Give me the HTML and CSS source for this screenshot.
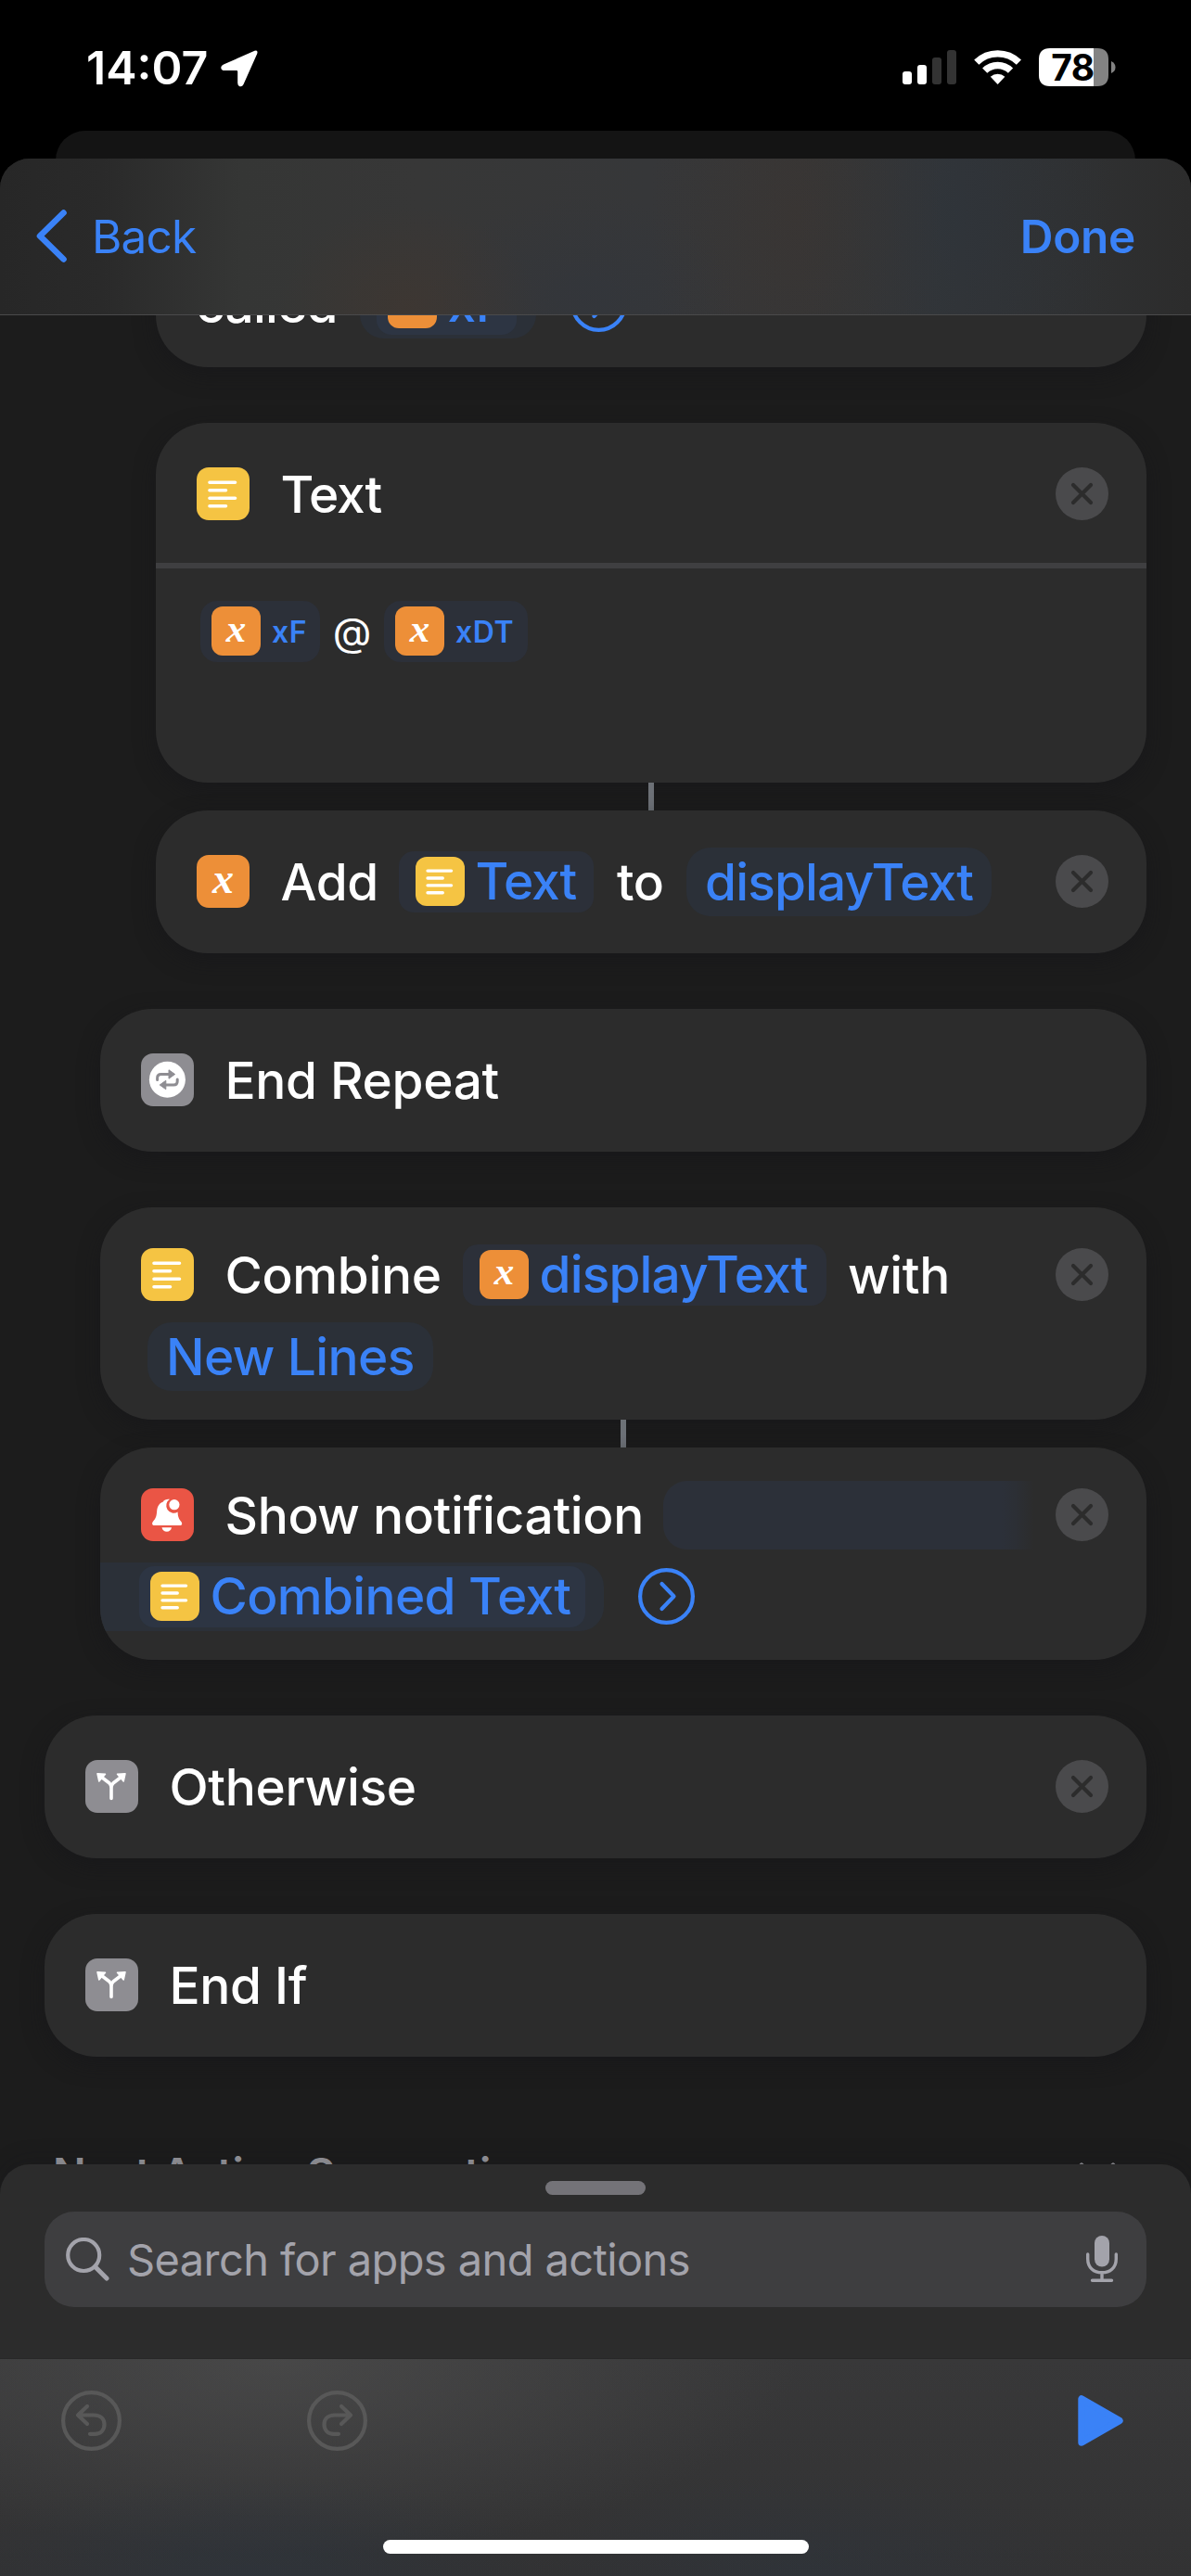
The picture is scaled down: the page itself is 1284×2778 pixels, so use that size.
FILE: index.html
```html
<!DOCTYPE html>
<html lang="en">
<head>
<meta charset="utf-8">
<title>Shortcut editor</title>
<link rel="stylesheet" href="styles.css">
</head>
<body>
<svg class="defs" aria-hidden="true">
  <symbol id="i-text" viewBox="0 0 57 57">
    <path d="M14 16.2H41.5M14 24.7H31.5M14 33.2H41.5M14 41.7H31.5" fill="none" stroke="#fff" stroke-width="3.6" stroke-linecap="round"/>
  </symbol>
  <symbol id="i-repeat" viewBox="0 0 57 57">
    <circle cx="28.4" cy="28.3" r="19.5" fill="#fff"/>
    <g fill="none" stroke="#8e8d92" stroke-width="3" stroke-linecap="round">
      <path d="M17.6 28.5V26.5Q17.6 22.5 21.6 22.5H31"/>
      <path d="M39.2 28V30Q39.2 34 35.2 34H26"/>
    </g>
    <path d="M30 17.8L36.6 22.5L30 27.2ZM26.8 29.3L20.2 34L26.8 38.7Z" fill="#8e8d92" stroke="#8e8d92" stroke-width="1" stroke-linejoin="round"/>
  </symbol>
  <symbol id="i-bell" viewBox="0 0 57 57">
    <path d="M28 12C29.5 11.6 31 11.8 31 11.8A8 8 0 0 0 39.6 25.4C39.8 31 41 33.200 43.400 36C45 38.500 44 40 42 40H14.500C12 40 11.500 38 12.800 36C16.500 32 16.800 29 17.200 24C17.700 18.500 20.500 15.600 24 14.400C24.700 12.800 26.500 12.100 28 12Z" fill="#fff"/>
    <circle cx="35.900" cy="17.700" r="5.600" fill="#fff"/>
    <path d="M22.500 42.200H33C32.500 45 30.500 46.800 27.800 46.800S23 45 22.500 42.200Z" fill="#fff"/>
  </symbol>
  <symbol id="i-branch" viewBox="0 0 57 57">
    <path d="M28 41.500V30Q28 27 26 25L17.500 18.500M28 30Q28 27 30 25L38.500 18.500" fill="none" stroke="#fff" stroke-width="3.600" stroke-linecap="round" stroke-linejoin="round"/>
    <path d="M13 14.800L21.500 15.200L14.800 23ZM43 14.800L34.500 15.200L41.200 23Z" fill="#fff" stroke="#fff" stroke-width="1.500" stroke-linejoin="round"/>
  </symbol>
  <symbol id="i-close" viewBox="0 0 57 57">
    <circle cx="28.500" cy="28.500" r="28.500" fill="#4a4a4c"/>
    <path d="M19 19L38 38M38 19L19 38" stroke="#2c2c2c" stroke-width="4.200" stroke-linecap="round"/>
  </symbol>
  <symbol id="i-more" viewBox="0 0 61 61">
    <g fill="none" stroke="#3a82f7" stroke-width="4.200" stroke-linecap="round" stroke-linejoin="round">
      <circle cx="30.500" cy="30.500" r="28.400"/>
      <path d="M25.500 17L38.500 30.500L25.500 44"/>
    </g>
  </symbol>
</svg>

<div class="status">
  <div class="clock">14:07</div>
  <svg class="location" viewBox="0 0 40 40"><path d="M36.500 .8Q40.500 -.5 39.200 4L24.500 37Q23 40 20.500 39.200Q18.200 38.600 18.200 35.500V23.200Q18.200 22 17 22H4Q.6 22 .3 19.200Q0 16.800 3 15.500Z" fill="#fff"/></svg>
  <svg class="indicators" viewBox="0 0 230 42">
    <rect x="0" y="25" width="10" height="14" rx="3" fill="#fff"/>
    <rect x="16" y="18" width="10" height="21" rx="3" fill="#fff"/>
    <rect x="32" y="10" width="10" height="29" rx="3" fill="#333"/>
    <rect x="48" y="2" width="10" height="37" rx="3" fill="#333"/>
    <g fill="none" stroke="#fff" stroke-width="7.400">
      <path d="M79.800 15.200A32.500 32.500 0 0 1 125.400 15.200"/>
      <path d="M88.700 24.200A19.700 19.700 0 0 1 116.500 24.200"/>
    </g>
    <path d="M102.600 39L94.800 30.800A11.500 11.500 0 0 1 110.400 30.800Z" fill="#fff"/>
    <path d="M159 0H206V41H159Q147 41 147 29V12Q147 0 159 0Z" fill="#fff"/>
    <path d="M206 0H210Q222 0 222 12V29Q222 41 210 41H206Z" fill="#838383"/>
    <path d="M225 14Q229.500 16 229.500 20.500T225 27Z" fill="#838383"/>
    <text class="battery-level" x="183.500" y="34.500" text-anchor="middle">78</text>
  </svg>
</div>

<div class="behind"></div>

<main class="sheet">
  <header class="nav">
    <svg class="chevron" viewBox="0 0 33 57"><path d="M29.500 3.500L4 28.500L29.500 53.500" fill="none" stroke="#3a82f7" stroke-width="6.600" stroke-linecap="round" stroke-linejoin="round"/></svg>
    <div class="back">Back</div>
    <div class="done">Done</div>
  </header>

  <div class="scroller">
    <div class="list">
      <section class="card two l2 partial">
        <div class="row second">
          <span class="t w-called">called</span>
          <span class="chip outer o-xf"><span class="chip token k-xf"><span class="icon small orange">x</span><span class="t blue">xF</span></span></span>
          <svg class="more m1"><use href="#i-more"/></svg>
        </div>
      </section>

      <section class="card l2 text-card">
        <div class="row head">
          <span class="icon yellow"><svg><use href="#i-text"/></svg></span>
          <span class="t title tight">Text</span>
          <svg class="close"><use href="#i-close"/></svg>
        </div>
        <div class="content">
          <span class="chip token mini c-xf"><span class="icon small orange">x</span><span class="mt">xF</span></span>
          <span class="at">@</span>
          <span class="chip token mini c-xdt"><span class="icon small orange">x</span><span class="mt">xDT</span></span>
        </div>
      </section>
      <div class="link l2"></div>

      <section class="card one l2">
        <div class="row">
          <span class="icon orange">x</span>
          <span class="t title w-add">Add</span>
          <span class="chip token k-text"><span class="icon small yellow"><svg><use href="#i-text"/></svg></span><span class="t blue tight">Text</span></span>
          <span class="t w-to">to</span>
          <span class="chip field f-display"><span class="t blue snug">displayText</span></span>
          <svg class="close"><use href="#i-close"/></svg>
        </div>
      </section>

      <section class="card one l1 gap">
        <div class="row">
          <span class="icon grey"><svg><use href="#i-repeat"/></svg></span>
          <span class="t title">End Repeat</span>
        </div>
      </section>

      <section class="card two l1 gap">
        <div class="row">
          <span class="icon yellow"><svg><use href="#i-text"/></svg></span>
          <span class="t title w-combine">Combine</span>
          <span class="chip token k-display"><span class="icon small orange">x</span><span class="t blue snug">displayText</span></span>
          <span class="t w-with">with</span>
          <svg class="close"><use href="#i-close"/></svg>
        </div>
        <div class="row second">
          <span class="chip field f-lines"><span class="t blue lines">New Lines</span></span>
        </div>
      </section>
      <div class="link l1"></div>

      <section class="card two l1">
        <div class="row">
          <span class="icon red"><svg><use href="#i-bell"/></svg></span>
          <span class="t title w-show">Show notification</span>
          <span class="chip f-fade"></span>
          <svg class="close"><use href="#i-close"/></svg>
        </div>
        <div class="row second flush">
          <span class="chip outer o-combined"><span class="chip token k-combined"><span class="icon small yellow"><svg><use href="#i-text"/></svg></span><span class="t blue combined">Combined Text</span></span></span>
          <svg class="more m2"><use href="#i-more"/></svg>
        </div>
      </section>

      <section class="card one l0 gap">
        <div class="row">
          <span class="icon grey"><svg><use href="#i-branch"/></svg></span>
          <span class="t title">Otherwise</span>
          <svg class="close"><use href="#i-close"/></svg>
        </div>
      </section>

      <section class="card one l0 gap">
        <div class="row">
          <span class="icon grey"><svg><use href="#i-branch"/></svg></span>
          <span class="t title">End If</span>
        </div>
      </section>

      <div class="suggest">
        <span>Next Action Suggestions</span>
        <svg class="fold" viewBox="0 0 40 24"><path d="M3 3L20 20L37 3" fill="none" stroke="#8e8e93" stroke-width="5" stroke-linecap="round" stroke-linejoin="round"/></svg>
      </div>
    </div>
  </div>

  <div class="drawer">
    <div class="handle"></div>
    <div class="search">
      <svg class="glass" viewBox="0 0 47 47"><g fill="none" stroke="#a3a3ab" stroke-linecap="round"><circle cx="19.200" cy="19" r="17" stroke-width="4.200"/><path d="M31.500 31.500L44 44" stroke-width="5"/></g></svg>
      <span class="placeholder">Search for apps and actions</span>
      <svg class="mic" viewBox="0 0 34 51"><rect x="9" y="0" width="16" height="33.500" rx="8" fill="#a3a3ab"/><path d="M1.700 20V25C1.700 34.500 8.200 39.800 17 39.800S32.300 34.500 32.300 25V20M17 40V48M6.500 48.300H27.500" fill="none" stroke="#a3a3ab" stroke-width="3.400" stroke-linecap="round"/></svg>
    </div>
  </div>

  <footer class="toolbar">
    <div class="tools">
      <svg class="undo" viewBox="0 0 65 65"><g fill="none" stroke="#585858" stroke-width="4.200" stroke-linecap="round" stroke-linejoin="round"><circle cx="32.500" cy="32.500" r="30.400"/><path d="M28 17L18 26.500L28 36M19 26.500H35C43 26.500 46.500 31 46.500 36.500S43 46.800 36 46.800H31"/></g></svg>
      <svg class="redo" viewBox="0 0 65 65"><g fill="none" stroke="#585858" stroke-width="4.200" stroke-linecap="round" stroke-linejoin="round"><circle cx="32.500" cy="32.500" r="30.400"/><path d="M37 17L47 26.500L37 36M46 26.500H30C22 26.500 18.500 31 18.500 36.500S22 46.800 29 46.800H34"/></g></svg>
      <svg class="play" viewBox="0 0 49 55"><path d="M4 4V51L45 27.500Z" fill="#3a82f7" stroke="#3a82f7" stroke-width="7.400" stroke-linejoin="round"/></svg>
    </div>
    <div class="home"></div>
  </footer>
</main>
</body>
</html>
```
FILE: styles.css
```css
* { box-sizing: border-box; }

body {
  margin: 0;
  width: 1284px;
  height: 2778px;
  overflow: hidden;
  display: flex;
  flex-direction: column;
  background: #000;
  color: #fff;
  font-family: Inter, "Liberation Sans", sans-serif;
  white-space: nowrap;
}

svg { display: block; flex: none; }
.defs { position: absolute; width: 0; height: 0; }

/* Status bar */
.status { height: 141px; flex: none; display: flex; align-items: flex-start; padding: 52px 0 0 93px; }
.clock { width: 145px; height: 42px; line-height: 42px; font-size: 50px; font-weight: 600; letter-spacing: 0; }
.location { width: 40px; height: 40px; margin-top: 2px; }
.indicators { width: 230px; height: 42px; margin-left: 695px; }
.battery-level { font-size: 39px; font-weight: 700; letter-spacing: -.5px; fill: #000; }

.behind { height: 60px; flex: none; margin: 0 60px -30px; border-radius: 32px 32px 0 0; background: #141414; }

/* Sheet */
.sheet {
  position: relative;
  height: 2607px;
  flex: none;
  display: flex;
  flex-direction: column;
  border-radius: 32px 32px 0 0;
  overflow: hidden;
  background: #1c1c1c;
}

.nav {
  height: 169px;
  flex: none;
  display: flex;
  align-items: center;
  padding: 0 60px 1px 40px;
  border-bottom: 1px solid #4a4a4b;
  color: #3a82f7;
  background:
    radial-gradient(ellipse 140px 110px at 440px 160px, rgba(72, 54, 42, .36), transparent),
    radial-gradient(ellipse 160px 260px at 858px 60px, rgba(70, 52, 40, .24), transparent),
    radial-gradient(ellipse 170px 300px at 1030px 60px, rgba(42, 52, 64, .42), transparent),
    radial-gradient(ellipse 170px 110px at 630px 150px, rgba(46, 52, 62, .4), transparent),
    linear-gradient(90deg, #272727 0, #2a2a2a 110px, #353635 260px, #373737 450px, #363739 700px, #343536 1000px, #2f3031 1180px, #2c2c2c 1284px);
}
.chevron { width: 33px; height: 57px; margin-left: -1px; }
.back { margin-left: 27px; font-size: 49.5px; letter-spacing: -.8px; }
.done { margin-left: auto; font-size: 49.5px; font-weight: 600; letter-spacing: -.3px; }

.scroller { height: 1994px; flex: none; overflow: hidden; }
.list { margin-top: -173px; display: flex; flex-direction: column; }

/* Action cards */
.card {
  flex: none;
  margin-right: 48px;
  border-radius: 56px;
  background: #2c2c2c;
  box-shadow: 0 8px 22px rgba(22, 22, 26, .55);
  overflow: hidden;
}
.l0 { margin-left: 48px; }
.l1 { margin-left: 108px; }
.l2 { margin-left: 168px; }
.gap { margin-top: 60px; }
.one { height: 154px; padding-top: 33px; }
.two { height: 229px; padding-top: 29px; }
.partial { padding-top: 117px; }

.row { height: 88px; display: flex; align-items: center; padding: 0 41px 1px 44px; }
.row.flush { padding-left: 0; }

.icon {
  width: 57px;
  height: 57px;
  flex: none;
  display: flex;
  align-items: center;
  justify-content: center;
  border-radius: 13px;
  font: italic bold 46px/44px "Liberation Serif", serif;
  color: #fff;
  padding-bottom: 6px;
}
.icon svg { width: 57px; height: 57px; margin-bottom: -6px; }
.small { width: 53px; height: 53px; border-radius: 12px; font-size: 43px; }
.small svg { width: 53px; height: 53px; }
.yellow { background: #f5c443; }
.orange { background: #ed8f38; }
.grey { background: #8e8d92; }
.red { background: #ea5545; }

.t { font-size: 55px; line-height: 66px; font-weight: 500; letter-spacing: -.35px; flex: none; }
.tight { letter-spacing: -1.1px; }
.snug { letter-spacing: -.85px; }
.combined { letter-spacing: -.65px; }
.lines { letter-spacing: -.6px; }
.title { margin-left: 33.5px; }
.blue { color: #3a82f7; }
.close { width: 57px; height: 57px; margin-left: auto; }
.more { width: 61px; height: 61px; }

.w-called { width: 177px; margin-left: -1px; letter-spacing: -.8px; }
.w-add { width: 127.5px; }
.w-to { width: 75px; margin-left: 25px; }
.w-combine { width: 256.5px; }
.w-with { margin-left: 23px; }
.w-show { width: 472.5px; }

.chip { flex: none; display: flex; align-items: center; background: #2c3039; }
.token { height: 66px; border-radius: 16px; padding: 0 0 1px 18px; }
.token .t { margin-left: 11.5px; }
.field { height: 74px; border-radius: 26px; padding-left: 20px; background: #2b3038; }
.outer { height: 74px; border-radius: 26px; background: #2b3038; }
.outer .token { background: #2d3543; padding-left: 12px; }

.k-text { width: 210px; }
.k-display { width: 392px; }
.k-xf { width: 151px; margin-left: 18px; }
.o-xf { width: 190px; }
.m1 { margin-left: 37px; }
.f-display { width: 329px; }
.f-lines { width: 308px; margin-left: 7px; }
.f-fade { width: 400px; height: 74px; border-radius: 26px 0 0 26px; background: linear-gradient(90deg, #2c3039 365px, #2c2f35 380px, #2c2c2c 400px); }
.o-combined { width: 543px; border-radius: 0 26px 26px 0; }
.k-combined { width: 481px; margin-left: 42px; }
.m2 { margin-left: 37px; }

.text-card { height: 388px; margin-top: 60px; }
.row.head { height: 157px; padding: 2px 41px 0 44px; border-bottom: 6px solid #3f3f41; }
.content { display: flex; align-items: center; padding: 35px 0 0 48px; }
.mini { padding-left: 12px; }
.mt { margin: 2px 0 0 12px; font-size: 32px; line-height: 40px; font-weight: 600; letter-spacing: .6px; color: #3a82f7; }
.c-xf { width: 129px; border-radius: 18px; }
.c-xdt { width: 155px; border-radius: 18px; }
.at { width: 69px; text-align: center; font-size: 43px; line-height: 50px; }

.link { flex: none; width: 6px; height: 30px; background: #6d7177; }
.link.l2 { margin-left: 699px; }
.link.l1 { margin-left: 669px; }

.suggest {
  margin: 98px 81px 0 57px;
  display: flex;
  align-items: center;
  justify-content: space-between;
  font-size: 47px;
  line-height: 56px;
  font-weight: 600;
  letter-spacing: -.3px;
  color: #97979c;
}
.fold { width: 40px; height: 24px; }

/* Search drawer */
.drawer {
  position: relative;
  height: 209px;
  flex: none;
  padding: 18px 48px 0;
  border-radius: 32px 32px 0 0;
  background: #2c2c2c;
  box-shadow: 0 -4px 24px rgba(22, 22, 26, .2), 0 40px 0 #2c2c2c;
}
.handle { width: 108px; height: 15px; margin: 0 auto 18px; border-radius: 8px; background: #747378; }
.search { height: 103px; display: flex; align-items: center; padding: 0 31px 0 23px; border-radius: 32px; background: #3e3e40; }
.glass { width: 47px; height: 47px; }
.placeholder { margin-left: 19px; font-size: 47px; line-height: 60px; letter-spacing: -.6px; color: #a3a3ab; }
.mic { width: 34px; height: 51px; margin-left: auto; }

/* Toolbar */
.toolbar {
  position: relative;
  height: 235px;
  flex: none;
  border-top: 1px solid #272727;
  background:
    radial-gradient(ellipse 330px 110px at 270px 235px, rgba(44, 52, 62, .6), transparent),
    radial-gradient(ellipse 300px 110px at 870px 235px, rgba(44, 52, 62, .5), transparent),
    radial-gradient(ellipse 560px 210px at 300px 0, rgba(78, 78, 78, .7), transparent),
    linear-gradient(180deg, #383839, #323233);
}
.tools { display: flex; align-items: center; height: 65px; margin: 34px 73px 0 66px; }
.undo, .redo { width: 65px; height: 65px; }
.redo { margin-left: 200px; }
.play { width: 49px; height: 55px; margin-left: auto; }
.home { width: 459px; height: 15px; margin: 96px auto 0; border-radius: 8px; background: #fff; }
```
